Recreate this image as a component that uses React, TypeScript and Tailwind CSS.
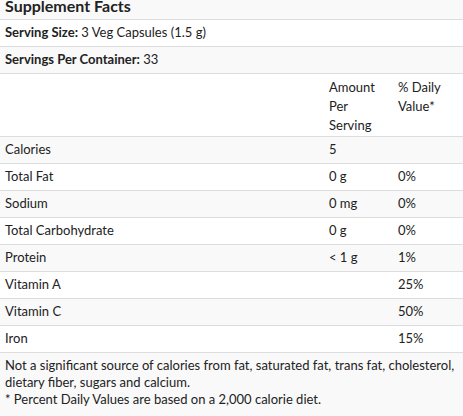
import React from 'react';

const rows = [
  { label: 'Calories', amount: '5', dv: '' },
  { label: 'Total Fat', amount: '0 g', dv: '0%' },
  { label: 'Sodium', amount: '0 mg', dv: '0%' },
  { label: 'Total Carbohydrate', amount: '0 g', dv: '0%' },
  { label: 'Protein', amount: '< 1 g', dv: '1%' },
  { label: 'Vitamin A', amount: '', dv: '25%' },
  { label: 'Vitamin C', amount: '', dv: '50%' },
  { label: 'Iron', amount: '', dv: '15%' },
];

export default function App() {
  return (
    <div className="w-[463px] h-[416px] overflow-hidden bg-white text-[13px] leading-[19px] text-[#222]" style={{ fontFamily: 'Lato, "Open Sans", sans-serif' }}>
      <div className="h-[20px] bg-[#f9f9f9] border-b border-[#ddd] px-[5px] overflow-hidden">
        <div className="text-[16px] font-bold leading-[20px] -mt-[4px]">Supplement Facts</div>
      </div>
      <div className="h-[27px] border-b border-[#ddd] px-[5px] pt-[3px]">
        <span className="font-bold">Serving Size:</span> 3 Veg Capsules (1.5 g)
      </div>
      <div className="h-[27px] bg-[#f9f9f9] border-b border-[#ddd] px-[5px] pt-[3px]">
        <span className="font-bold">Servings Per Container:</span> 33
      </div>
      <div className="flex h-[63px] border-b border-[#ddd] pt-[4px]">
        <div className="w-[324px]" />
        <div className="w-[69px] px-[5px]">Amount Per Serving</div>
        <div className="flex-1 px-[5px]">% Daily Value*</div>
      </div>
      {rows.map((r, i) => (
        <div key={r.label} className={`flex h-[27px] border-b border-[#ddd] pt-[3px] ${i % 2 === 0 ? 'bg-[#f9f9f9]' : 'bg-white'}`}>
          <div className="w-[324px] px-[5px]">{r.label}</div>
          <div className="w-[69px] px-[5px]">{r.amount}</div>
          <div className="flex-1 px-[5px]">{r.dv}</div>
        </div>
      ))}
      <div className="bg-[#f9f9f9] px-[5px] pt-[4px] pb-[6px] leading-[17px] h-[63px]">
        Not a significant source of calories from fat, saturated fat, trans fat, cholesterol, dietary fiber, sugars and calcium.
        <br />* Percent Daily Values are based on a 2,000 calorie diet.
      </div>
    </div>
  );
}
